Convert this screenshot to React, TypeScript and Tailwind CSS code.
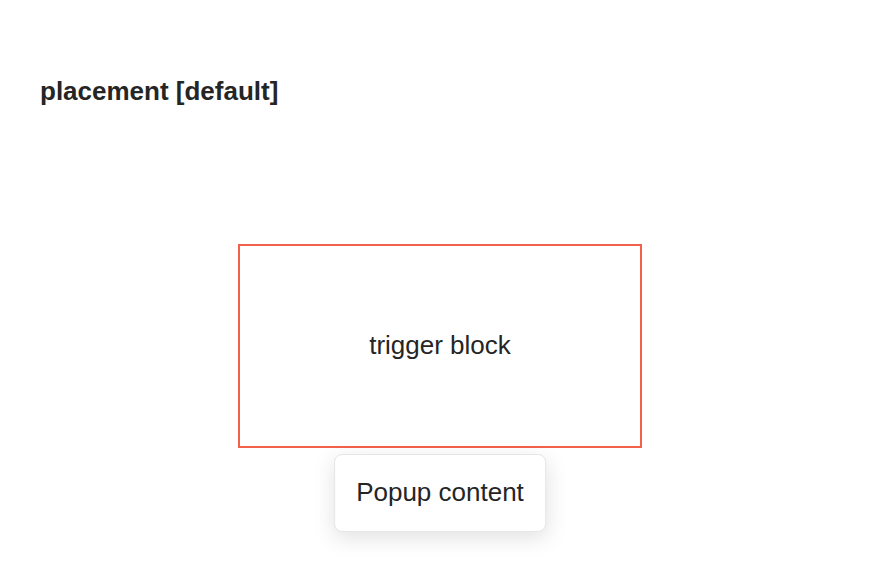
export default function App() {
  return (
    <div className="min-h-[586px] w-[880px] bg-white px-10 pt-[76px] text-[#252525] [font-family:'Liberation_Sans',Arial,sans-serif]">
      <h2 className="text-[26px] font-bold leading-[30px]">placement [default]</h2>

      <div className="mt-[138px] flex justify-center">
        <div className="relative">
          {/* Trigger */}
          <div className="flex h-[204px] w-[404px] items-center justify-center border-2 border-[#f2614b] pb-[2px] text-[26px] leading-[30px]">
            trigger block
          </div>

          {/* Popup */}
          <div className="absolute left-1/2 top-full mt-[6px] -translate-x-1/2 whitespace-nowrap rounded-lg border border-[#e6e6e6] bg-white px-[21px] pb-[21px] pt-[19px] text-[26px] leading-[36px] shadow-[0_6px_22px_rgba(0,0,0,0.12)]">
            Popup content
          </div>
        </div>
      </div>
    </div>
  );
}
